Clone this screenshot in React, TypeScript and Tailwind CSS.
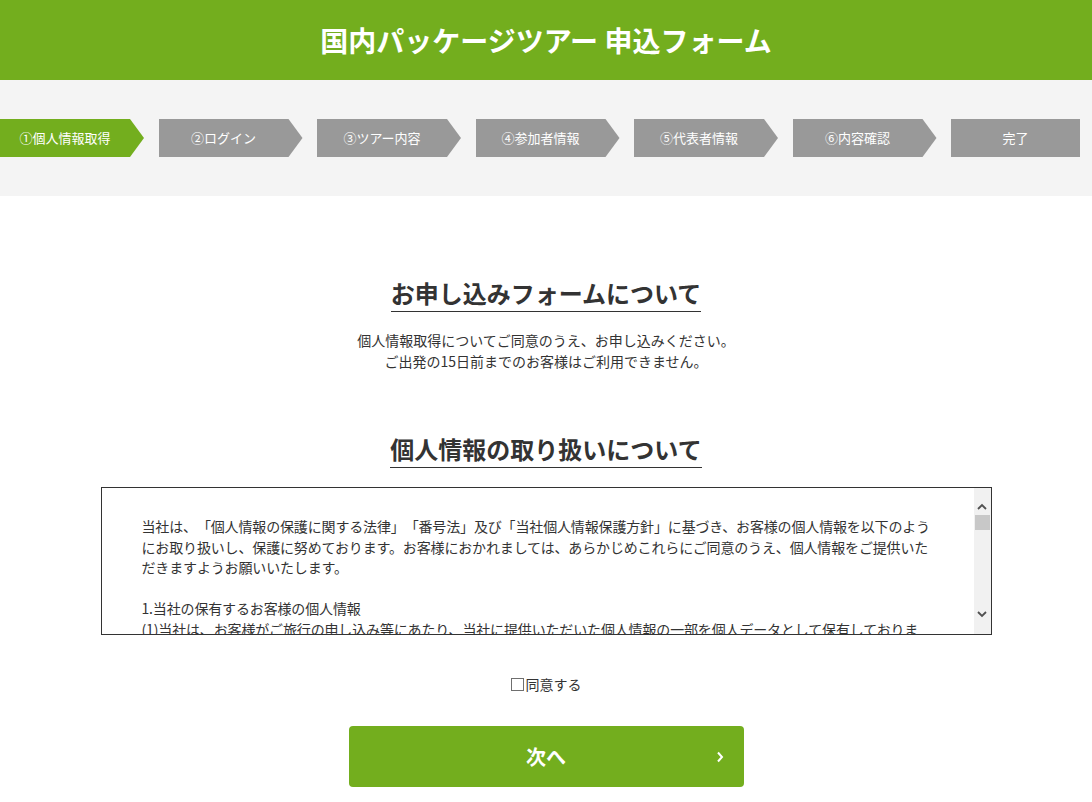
import React from 'react';

const steps = ['①個人情報取得', '②ログイン', '③ツアー内容', '④参加者情報', '⑤代表者情報', '⑥内容確認', '完了'];

const policyLines = [
  '当社は、「個人情報の保護に関する法律」「番号法」及び「当社個人情報保護方針」に基づき、お客様の個人情報を以下のよう',
  'にお取り扱いし、保護に努めております。お客様におかれましては、あらかじめこれらにご同意のうえ、個人情報をご提供いた',
  'だきますようお願いいたします。',
  '',
  '1.当社の保有するお客様の個人情報',
  '(1)当社は、お客様がご旅行の申し込み等にあたり、当社に提供いただいた個人情報の一部を個人データとして保有しておりま',
];

const font = { fontFamily: '"Noto Sans CJK JP", "Noto Sans", sans-serif' };

const SectionTitle = ({ children }: { children: React.ReactNode }) => (
  <h2 className="inline-block border-b border-[#333] pb-[2px] text-[24px] font-bold leading-[32px] text-[#333]">
    {children}
  </h2>
);

const App = () => {
  return (
    <div className="min-h-[802px] w-[1092px] bg-white [text-spacing-trim:space-all]" style={font}>
      <header className="flex h-[80px] items-center justify-center bg-[#73ae1e]">
        <h1 className="text-[28px] font-bold text-white">国内パッケージツアー 申込フォーム</h1>
      </header>

      <nav className="flex h-[116px] items-center gap-[14.5px] bg-[#f4f4f4]">
        {steps.map((step, i) => {
          const last = i === steps.length - 1;
          return (
            <div
              key={step}
              className={`flex h-[38px] shrink-0 items-center ${
                last ? 'w-[129px]' : 'w-[144px] [clip-path:polygon(0_0,130px_0,144px_50%,130px_100%,0_100%)]'
              } ${i === 0 ? 'bg-[#73ae1e]' : 'bg-[#999999]'}`}
            >
              <span className={`${last ? 'w-[129px]' : 'w-[130px]'} text-center text-[13px] text-white`}>{step}</span>
            </div>
          );
        })}
      </nav>

      <main className="flex flex-col items-center pt-[81px]">
        <SectionTitle>お申し込みフォームについて</SectionTitle>
        <p className="mt-[18px] text-center text-[14px] leading-[21px] text-[#333]">
          個人情報取得についてご同意のうえ、お申し込みください。
          <br />
          ご出発の15日前までのお客様はご利用できません。
        </p>

        <div className="mt-[61px]">
          <SectionTitle>個人情報の取り扱いについて</SectionTitle>
        </div>

        <div className="mt-[19px] flex h-[148px] w-[891px] border border-[#333]">
          <div className="flex-1 overflow-hidden pl-[40px] pt-[28px] text-[14px] leading-[20.6px] text-[#333]">
            {policyLines.map((line, i) => (
              <div key={i} className="h-[20.6px] whitespace-nowrap tracking-[-0.15px]">
                {line}
              </div>
            ))}
          </div>
          <div className="flex w-[17px] flex-col items-center bg-[#f1f1f1]">
            <svg width="10" height="8" viewBox="0 0 10 8" className="mt-[15px]">
              <path d="M1 6 L5 2 L9 6" fill="none" stroke="#505050" strokeWidth="1.8" />
            </svg>
            <div className="mt-[4px] h-[15px] w-[15px] bg-[#c8c8c8]" />
            <div className="flex-1" />
            <svg width="10" height="8" viewBox="0 0 10 8" className="mb-[16px]">
              <path d="M1 2 L5 6 L9 2" fill="none" stroke="#505050" strokeWidth="1.8" />
            </svg>
          </div>
        </div>

        <label className="mt-[39px] flex items-center text-[14px] leading-[20px] text-[#333]">
          <span className="mr-[2px] inline-block h-[13px] w-[13px] border border-[#6f6f6f] bg-white" />
          同意する
        </label>

        <button className="relative mt-[32px] flex h-[61px] w-[395px] items-center justify-center rounded-[4px] bg-[#73ae1e] text-[20px] font-bold text-white">
          次へ
          <svg width="8" height="12" viewBox="0 0 8 12" className="absolute right-[20px] top-[25px]">
            <path d="M2 1.5 L6 6 L2 10.5" fill="none" stroke="white" strokeWidth="2" />
          </svg>
        </button>
      </main>
    </div>
  );
};

export default App;
